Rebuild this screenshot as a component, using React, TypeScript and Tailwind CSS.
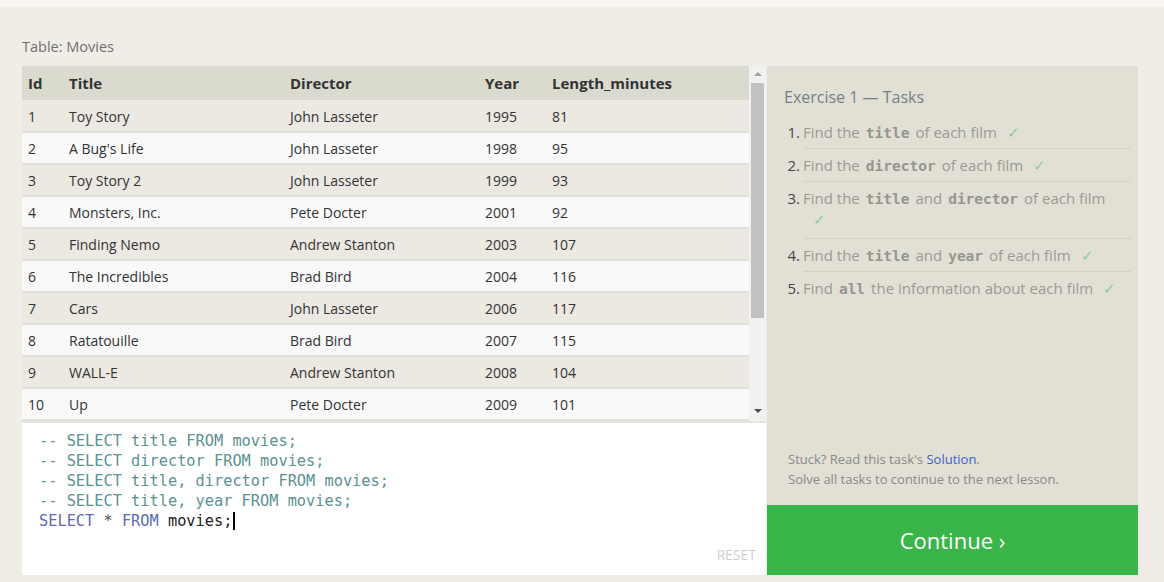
const movies = [
  [1, "Toy Story", "John Lasseter", 1995, 81],
  [2, "A Bug's Life", "John Lasseter", 1998, 95],
  [3, "Toy Story 2", "John Lasseter", 1999, 93],
  [4, "Monsters, Inc.", "Pete Docter", 2001, 92],
  [5, "Finding Nemo", "Andrew Stanton", 2003, 107],
  [6, "The Incredibles", "Brad Bird", 2004, 116],
  [7, "Cars", "John Lasseter", 2006, 117],
  [8, "Ratatouille", "Brad Bird", 2007, 115],
  [9, "WALL-E", "Andrew Stanton", 2008, 104],
  [10, "Up", "Pete Docter", 2009, 101],
];

const comments = [
  "-- SELECT title FROM movies;",
  "-- SELECT director FROM movies;",
  "-- SELECT title, director FROM movies;",
  "-- SELECT title, year FROM movies;",
];

function Code({ children }: { children: string }) {
  return (
    <code className="mx-[6px] font-['DejaVu_Sans_Mono',monospace] text-[14.5px] leading-none font-bold text-[#959590]">
      {children}
    </code>
  );
}

function Check() {
  return <span className="ml-[10px] text-[#8fc99a]">✓</span>;
}

function Task({ n, last, tall, children }: { n: number; last?: boolean; tall?: boolean; children: React.ReactNode }) {
  return (
    <li className="flex">
      <span className="w-[19px] shrink-0 pr-[3px] pt-[6px] text-right text-[#444]">{n}.</span>
      <div
        className={`flex-1 pt-[6px] ${tall ? "pb-[8px] leading-[22px]" : "pb-[6px]"} ${last ? "" : "border-b border-[#d4d2c6]"}`}
      >
        {children}
      </div>
    </li>
  );
}

export default function App() {
  return (
    <div className="min-h-[582px] bg-[#efede6] font-['Open_Sans',sans-serif]">
      <div className="h-[7px] bg-[#f7f6f2]" />
      <div className="pl-[22px] pt-[30px]">
        <p className="text-[14.5px] leading-[20px] text-[#707070]">Table: Movies</p>
        <div className="mt-[9px] flex w-[1116px]">
          <div className="w-[744px]">
            <div className="flex h-[355px]">
              <table className="w-[727px] table-fixed border-collapse text-[14px] text-[#333]">
                <colgroup>
                  <col className="w-[47px]" />
                  <col className="w-[221px]" />
                  <col className="w-[195px]" />
                  <col className="w-[67px]" />
                  <col />
                </colgroup>
                <thead>
                  <tr className="h-[34px] bg-[#dbdacf] text-left text-[15px] font-bold text-[#333]">
                    <th className="pl-[6px]">Id</th>
                    <th>Title</th>
                    <th>Director</th>
                    <th>Year</th>
                    <th>Length_minutes</th>
                  </tr>
                </thead>
                <tbody>
                  {movies.map((m, i) => (
                    <tr
                      key={m[0]}
                      className={`h-[32px] border-b-2 border-[#e2e1db] ${i % 2 === 0 ? "bg-[#ebe9e2]" : "bg-[#f9f9f9]"} ${i === 9 ? "border-b-0" : ""}`}
                    >
                      <td className="pl-[6px] pt-[1px]">{m[0]}</td>
                      <td className="pt-[1px]">{m[1]}</td>
                      <td className="pt-[1px]">{m[2]}</td>
                      <td className="pt-[1px]">{m[3]}</td>
                      <td className="pt-[1px]">{m[4]}</td>
                    </tr>
                  ))}
                </tbody>
              </table>
              <div className="flex w-[17px] flex-col items-center bg-[#f1f1f1]">
                <div className="mt-[6px] h-0 w-0 border-x-[4px] border-b-[4px] border-x-transparent border-b-[#a3a3a3]" />
                <div className="mt-[7px] h-[235px] w-[13px] bg-[#c1c1c1]" />
                <div className="mt-auto mb-[8px] h-0 w-0 border-x-[4px] border-t-[4px] border-x-transparent border-t-[#505050]" />
              </div>
            </div>
            <div className="relative h-[154px] border-t-2 border-[#e6e5de] bg-white pl-[17px] pt-[8px] font-['DejaVu_Sans_Mono',monospace] text-[15.3px] leading-[20px]">
              {comments.map((c) => (
                <div key={c} className="h-[20px] text-[#5b9292]">{c}</div>
              ))}
              <div className="h-[20px]">
                <span className="text-[#5b6ab5]">SELECT </span>
                <span className="text-[#555]">* </span>
                <span className="text-[#5b6ab5]">FROM </span>
                <span className="border-r-2 border-black pr-[1px] text-[#222]">movies;</span>
              </div>
              <span className="absolute bottom-[10px] right-[10px] font-['Open_Sans',sans-serif] text-[14px] text-[#cfcfcf]">
                RESET
              </span>
            </div>
          </div>
          <div className="ml-[1px] flex w-[371px] flex-col">
            <div className="flex flex-1 flex-col bg-[#e2e0d4] pl-[17px] pr-[7px] pt-[20px]">
              <h2 className="text-[16px] leading-[22px] text-[#73808c]">Exercise 1 — Tasks</h2>
              <ol className="mt-[8px] text-[15px] leading-[20px] text-[#9a9a94]">
                <Task n={1}>
                  Find the<Code>title</Code>of each film
                  <Check />
                </Task>
                <Task n={2}>
                  Find the<Code>director</Code>of each film
                  <Check />
                </Task>
                <Task n={3} tall>
                  <span className="block leading-[20px]">
                    Find the<Code>title</Code>and<Code>director</Code>of each film
                  </span>
                  <Check />
                </Task>
                <Task n={4}>
                  Find the<Code>title</Code>and<Code>year</Code>of each film
                  <Check />
                </Task>
                <Task n={5} last>
                  Find<Code>all</Code>the information about each film
                  <Check />
                </Task>
              </ol>
              <div className="mt-auto pb-[16px] pl-[4px] text-[13px] leading-[20px] text-[#888]">
                <p>
                  Stuck? Read this task's <span className="text-[#3b5fd0]">Solution</span>.
                </p>
                <p>Solve all tasks to continue to the next lesson.</p>
              </div>
            </div>
            <button className="h-[70px] bg-[#3ab54a] text-[22px] text-white">Continue ›</button>
          </div>
        </div>
      </div>
    </div>
  );
}
